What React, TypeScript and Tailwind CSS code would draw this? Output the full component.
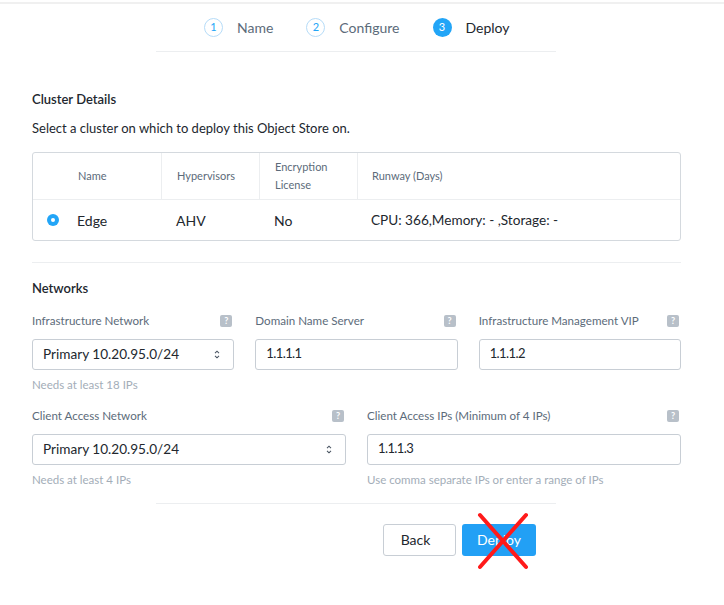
import React from 'react';

const font = { fontFamily: 'Lato, "Open Sans", sans-serif' };

function Help() {
  return (
    <span className="w-[12px] h-[12px] rounded-[2px] bg-[#b8c0c9] text-white text-[9px] font-bold leading-[12px] text-center">?</span>
  );
}

function Arrows() {
  return (
    <svg width="6" height="9" viewBox="0 0 6 9" className="text-[#4a5562]">
      <path d="M1 3.2 L3 1.2 L5 3.2" fill="none" stroke="currentColor" strokeWidth="1.1" />
      <path d="M1 5.8 L3 7.8 L5 5.8" fill="none" stroke="currentColor" strokeWidth="1.1" />
    </svg>
  );
}

function Label({ text }: { text: string }) {
  return (
    <div className="flex items-center justify-between h-[18px] pr-[2px] mb-[9px]">
      <span className="text-[11.6px] text-[#5c6b7a]">{text}</span>
      <Help />
    </div>
  );
}

function Select({ value }: { value: string }) {
  return (
    <div className="h-[31px] border border-[#c8ced5] rounded-[3px] flex items-center justify-between pl-[10px] pr-[13px] text-[13.6px] text-[#22272e]">
      <span>{value}</span>
      <Arrows />
    </div>
  );
}

function Input({ value }: { value: string }) {
  return (
    <div className="h-[31px] border border-[#c8ced5] rounded-[3px] flex items-center pl-[10px] text-[13px] tracking-[-0.6px] text-[#22272e]">
      {value}
    </div>
  );
}

function Hint({ text }: { text: string }) {
  return <div className="text-[11.5px] text-[#a3adb8] mt-[6px] h-[14px]">{text}</div>;
}

function Step({ n, label, active }: { n: number; label: string; active?: boolean }) {
  return (
    <div className="flex items-center gap-[14px]">
      <span
        className={
          active
            ? 'w-[19px] h-[19px] rounded-full bg-[#22a5f7] text-white text-[11px] flex items-center justify-center'
            : 'w-[19px] h-[19px] rounded-full border border-[#b6dcf8] text-[#22a5f7] text-[11px] flex items-center justify-center'
        }
      >
        {n}
      </span>
      <span className={active ? 'text-[14px] text-[#22272e]' : 'text-[14px] text-[#5c6b7a]'}>{label}</span>
    </div>
  );
}

export default function App() {
  return (
    <div className="w-[724px] h-[605px] bg-white relative overflow-hidden" style={font}>
      <div className="h-[2px] mt-[2px] bg-[#f0f0f0]" />
      <div className="w-[400px] ml-[156px] h-[48px] border-b border-[#eceef0] flex items-center gap-[33px] pl-[48px]">
        <Step n={1} label="Name" />
        <Step n={2} label="Configure" />
        <Step n={3} label="Deploy" active />
      </div>

      <div className="pl-[32px] w-[681px]">
        <div className="mt-[38px] text-[13px] font-semibold text-[#22272e]">Cluster Details</div>
        <div className="mt-[9px] text-[13px] text-[#22272e]">Select a cluster on which to deploy this Object Store on.</div>

        <div className="mt-[14px] border border-[#d4d9de] rounded-[3px]">
          <div className="flex h-[47px] border-b border-[#eceef0] text-[11px] text-[#5c6b7a]">
            <div className="w-[128px] pl-[45px] flex items-center">Name</div>
            <div className="w-[98px] border-l border-[#eceef0] pl-[15px] flex items-center">Hypervisors</div>
            <div className="w-[98px] border-l border-[#eceef0] pl-[15px] flex items-center leading-[18px]">
              Encryption
              <br />
              License
            </div>
            <div className="flex-1 border-l border-[#eceef0] pl-[14px] flex items-center">Runway (Days)</div>
          </div>
          <div className="flex h-[40px] text-[14px] text-[#22272e]">
            <div className="w-[128px] flex items-center">
              <span className="ml-[14px] w-[12px] h-[12px] rounded-full bg-[#22a5f7] flex items-center justify-center">
                <span className="w-[4px] h-[4px] rounded-full bg-white" />
              </span>
              <span className="ml-[18px]">Edge</span>
            </div>
            <div className="w-[98px] pl-[15px] flex items-center">AHV</div>
            <div className="w-[98px] pl-[15px] flex items-center">No</div>
            <div className="flex-1 pl-[14px] flex items-center text-[13.6px]">CPU: 366,Memory: - ,Storage: -</div>
          </div>
        </div>

        <div className="mt-[21px] border-t border-[#eceef0]" />

        <div className="mt-[16px] text-[13px] font-semibold text-[#22272e]">Networks</div>

        <div className="mt-[13px] grid grid-cols-3 gap-x-[21px]">
          <div>
            <Label text="Infrastructure Network" />
            <Select value="Primary 10.20.95.0/24" />
            <Hint text="Needs at least 18 IPs" />
          </div>
          <div>
            <Label text="Domain Name Server" />
            <Input value="1.1.1.1" />
          </div>
          <div>
            <Label text="Infrastructure Management VIP" />
            <Input value="1.1.1.2" />
          </div>
        </div>

        <div className="mt-[17px] grid grid-cols-2 gap-x-[21px]">
          <div>
            <Label text="Client Access Network" />
            <Select value="Primary 10.20.95.0/24" />
            <Hint text="Needs at least 4 IPs" />
          </div>
          <div>
            <Label text="Client Access IPs (Minimum of 4 IPs)" />
            <Input value="1.1.1.3" />
            <Hint text="Use comma separate IPs or enter a range of IPs" />
          </div>
        </div>
      </div>

      <div className="w-[400px] ml-[156px] mt-[18px] border-t border-[#eceef0]" />

      <div className="ml-[383px] mt-[20px] flex gap-[6px]">
        <button className="w-[73px] h-[32px] border border-[#c8ced5] rounded-[3px] text-[14px] text-[#22272e] bg-white pr-[8px]">Back</button>
        <div className="relative">
          <button className="w-[74px] h-[32px] rounded-[3px] text-[14px] text-white bg-[#22a0f5]">Deploy</button>
          <svg className="absolute left-[15px] top-[-12px]" width="52" height="58" viewBox="0 0 52 58">
            <path d="M3 3 L49 55 M49 3 L3 55" stroke="#ff1a1a" strokeWidth="4" strokeLinecap="round" />
          </svg>
        </div>
      </div>
    </div>
  );
}
